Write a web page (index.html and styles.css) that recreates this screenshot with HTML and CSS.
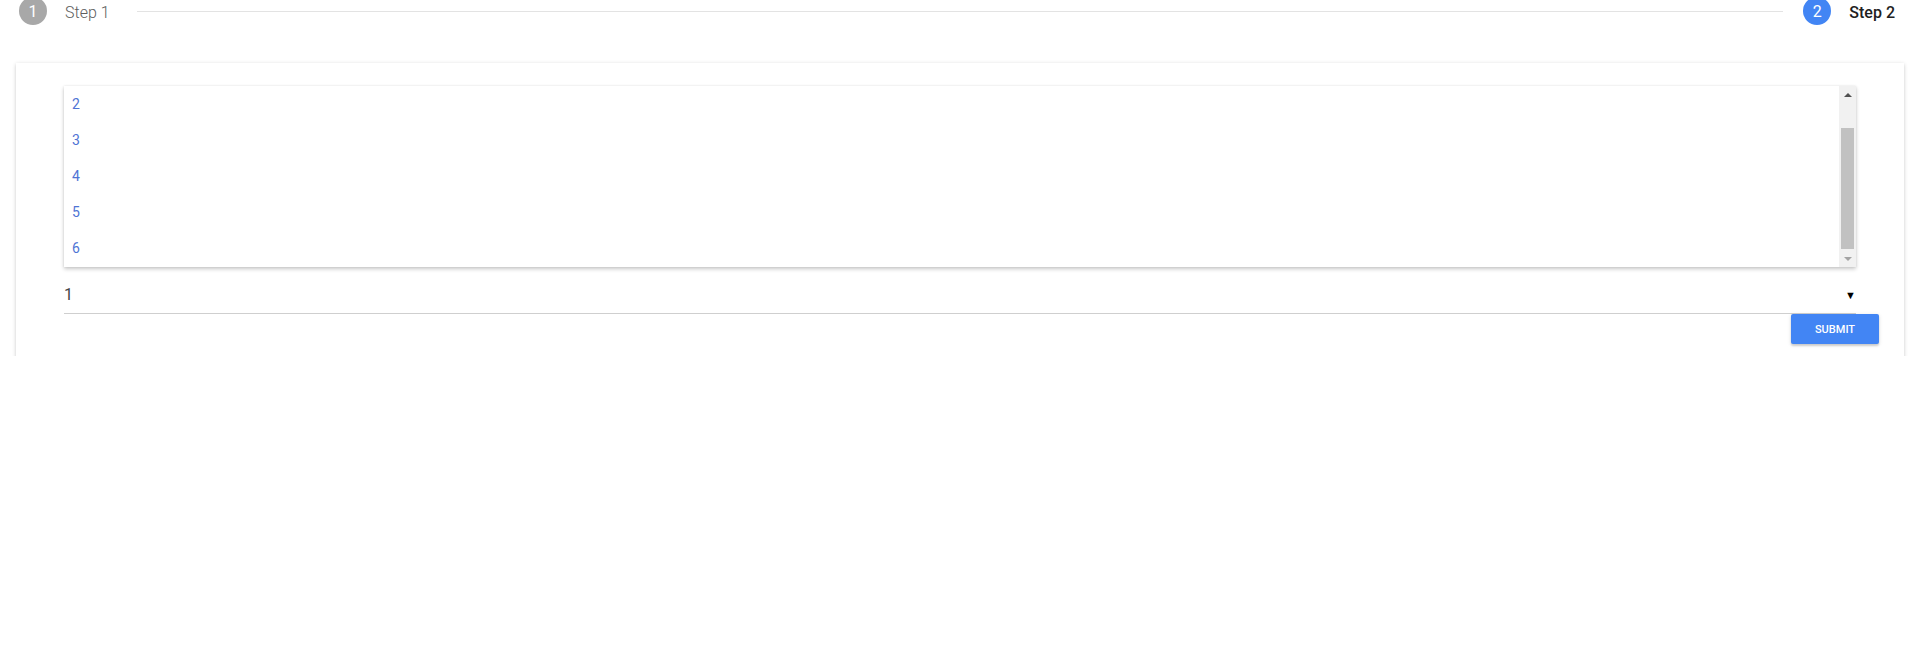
FILE: index.html
```html
<!DOCTYPE html>
<html>
<head>
<meta charset="utf-8">
<link rel="stylesheet" href="styles.css">
</head>
<body>
<div class="stepper">
  <div class="step-header">
    <span class="circle done">1</span>
    <span class="step-title">Step 1</span>
  </div>
  <div class="step-line"></div>
  <div class="step-header">
    <span class="circle active">2</span>
    <span class="step-title active">Step 2</span>
  </div>
</div>
<div class="content">
  <div class="card">
    <div class="field">
      <div class="dropdown">
        <ul class="options">
          <li>2</li>
          <li>3</li>
          <li>4</li>
          <li>5</li>
          <li>6</li>
        </ul>
        <div class="scrollbar">
          <div class="sb-btn up"><span class="tri-up"></span></div>
          <div class="sb-track"><div class="sb-thumb"></div></div>
          <div class="sb-btn down"><span class="tri-down"></span></div>
        </div>
      </div>
      <div class="select">
        <span class="value">1</span>
        <span class="caret">▼</span>
      </div>
    </div>
    <div class="actions">
      <button class="btn">SUBMIT</button>
    </div>
  </div>
</div>
</body>
</html>
```
FILE: styles.css
```css
html, body {
  margin: 0;
  padding: 0;
  background: #fff;
  font-family: Roboto, "Liberation Sans", sans-serif;
}

.stepper {
  display: flex;
  align-items: center;
  height: 24px;
  padding: 0 19px;
}

.step-header {
  display: flex;
  align-items: center;
  gap: 18px;
}

.circle {
  width: 28px;
  height: 28px;
  border-radius: 50%;
  display: flex;
  align-items: center;
  justify-content: center;
  color: #fff;
  font-size: 16px;
  font-weight: 400;
  margin-top: -2px;
}

.circle.done {
  background: #a8a8a8;
}

.circle.active {
  background: #4285f4;
}

.step-title {
  font-size: 16px;
  font-weight: 300;
  color: #5e5e5e;
}

.step-title.active {
  font-weight: 500;
  color: #212121;
}

.step-line {
  flex: 1;
  height: 1px;
  background: #e3e3e3;
  margin: 0 20px 1px 27px;
}

.content {
  height: 332px;
  overflow: hidden;
  padding: 39px 10px 0 16px;
  box-sizing: border-box;
}

.card {
  background: #fff;
  box-shadow: 0 1px 4px rgba(0, 0, 0, 0.18), 0 2px 2px rgba(0, 0, 0, 0.06);
  padding-top: 23px;
  height: 400px;
}

.field {
  margin: 0 48px;
}

.dropdown {
  display: flex;
  height: 181px;
  background: #fff;
  box-shadow: 0 2px 4px rgba(0, 0, 0, 0.22), 0 0 2px rgba(0, 0, 0, 0.08);
}

.options {
  flex: 1;
  list-style: none;
  margin: 0;
  padding: 0;
}

.options li {
  height: 36px;
  line-height: 36px;
  padding-left: 8px;
  font-size: 14px;
  color: #4f74d4;
}

.scrollbar {
  width: 17px;
  background: #f1f1f1;
  display: flex;
  flex-direction: column;
}

.sb-btn {
  height: 17px;
  display: flex;
  align-items: center;
  justify-content: center;
}

.tri-up {
  width: 0;
  height: 0;
  border-left: 4px solid transparent;
  border-right: 4px solid transparent;
  border-bottom: 4px solid #505050;
}

.tri-down {
  width: 0;
  height: 0;
  border-left: 4px solid transparent;
  border-right: 4px solid transparent;
  border-top: 4px solid #a3a3a3;
}

.sb-track {
  flex: 1;
  padding: 25px 2px 1px;
  display: flex;
}

.sb-thumb {
  flex: 1;
  background: #c1c1c1;
}

.select {
  display: flex;
  align-items: center;
  justify-content: space-between;
  height: 47px;
  padding-top: 8px;
  box-sizing: border-box;
  border-bottom: 1px solid #cfcfcf;
}

.value {
  font-size: 16px;
  color: #444;
}

.caret {
  font-size: 11px;
  color: #000;
  margin-right: 0;
  margin-top: 2px;
}

.actions {
  display: flex;
  justify-content: flex-end;
  padding-right: 25px;
}

.btn {
  width: 88px;
  height: 30px;
  border: none;
  border-radius: 2px;
  background: #4285f4;
  color: #fff;
  font-family: Roboto, "Liberation Sans", sans-serif;
  font-size: 11px;
  font-weight: 500;
  box-shadow: 0 2px 2px rgba(0, 0, 0, 0.14), 0 1px 4px rgba(0, 0, 0, 0.12);
  padding: 0;
}
```
